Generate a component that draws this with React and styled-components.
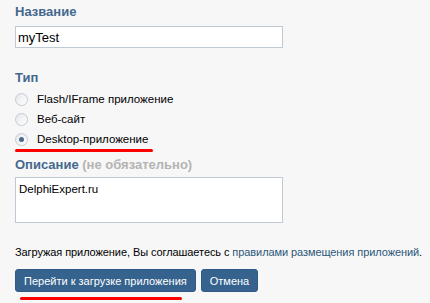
import React from 'react';
import styled, { createGlobalStyle } from 'styled-components';

const FONT = '"Liberation Sans", Arial, sans-serif';

const GlobalStyle = createGlobalStyle`
  html, body {
    margin: 0;
    padding: 0;
    background: #f7f7f7;
  }
  body {
    font-family: ${FONT};
    font-size: 11px;
    color: #000;
  }
`;

const Page = styled.div`
  width: 430px;
  height: 303px;
  padding: 4px 0 0 15px;
  box-sizing: border-box;
  display: flex;
  flex-direction: column;
  align-items: flex-start;
`;

const Label = styled.div`
  font-size: 13px;
  font-weight: bold;
  color: #45688e;
  line-height: 16px;
  margin-top: ${p => p.$top || 0}px;
`;

const Optional = styled.span`
  color: #b4b4b4;
`;

const TextInput = styled.input`
  display: block;
  width: 268px;
  height: 22px;
  box-sizing: border-box;
  border: 1px solid #c0cad5;
  background: #fff;
  font-family: ${FONT};
  font-size: 13px;
  padding: 0 2px;
  margin: 6px 0 0;
  outline: none;
`;

const RadioList = styled.div`
  display: flex;
  flex-direction: column;
  margin-top: 4px;
  gap: 2px;
`;

const RadioRow = styled.label`
  display: flex;
  align-items: center;
  gap: 9px;
  height: 18px;
  font-size: 11.5px;
  color: #000;
`;

const Circle = styled.span`
  width: 13px;
  height: 13px;
  box-sizing: border-box;
  border-radius: 50%;
  border: 1px solid #c4cbd2;
  background: linear-gradient(135deg, #e4e8ec, #ffffff);
  display: flex;
  align-items: center;
  justify-content: center;
  &::after {
    content: '';
    width: 5px;
    height: 5px;
    border-radius: 50%;
    background: ${p => (p.$checked ? '#4a6a8e' : 'transparent')};
  }
`;

const Underline = styled.div`
  width: ${p => p.$w}px;
  height: 3px;
  background: #ff0000;
  border-radius: 2px;
  margin-left: ${p => p.$left || 0}px;
  margin-top: ${p => p.$top || 0}px;
`;

const TextArea = styled.textarea`
  display: block;
  width: 268px;
  height: 46px;
  box-sizing: border-box;
  border: 1px solid #c0cad5;
  background: #fff;
  font-family: ${FONT};
  font-size: 11.5px;
  padding: 5px 3px;
  margin: 4px 0 0;
  resize: none;
  outline: none;
`;

const Agreement = styled.div`
  margin-top: 22px;
  line-height: 14px;
  letter-spacing: -0.08px;
  white-space: nowrap;
`;

const Link = styled.a`
  color: #2b587a;
  text-decoration: none;
`;

const Buttons = styled.div`
  display: flex;
  gap: 5px;
  margin-top: 10px;
`;

const Button = styled.button`
  height: 23px;
  padding: 0 8px;
  background: #36638e;
  border: 1px solid #2f5a83;
  border-radius: 3px;
  color: #fff;
  font-family: ${FONT};
  font-size: 11px;
  cursor: pointer;
`;

export default function App() {
  return (
    <>
      <GlobalStyle />
      <Page>
        <Label>Название</Label>
        <TextInput defaultValue="myTest" />
        <Label $top={22}>Тип</Label>
        <RadioList>
          <RadioRow><Circle />Flash/IFrame приложение</RadioRow>
          <RadioRow><Circle />Веб-сайт</RadioRow>
          <RadioRow><Circle $checked />Desktop-приложение</RadioRow>
        </RadioList>
        <Underline $w={138} $top={1} />
        <Label $top={5}>Описание <Optional>(не обязательно)</Optional></Label>
        <TextArea defaultValue="DelphiExpert.ru" />
        <Agreement>
          Загружая приложение, Вы соглашаетесь с <Link href="#">правилами размещения приложений</Link>.
        </Agreement>
        <Buttons>
          <Button>Перейти к загрузке приложения</Button>
          <Button>Отмена</Button>
        </Buttons>
        <Underline $w={162} $left={5} $top={5} />
      </Page>
    </>
  );
}
